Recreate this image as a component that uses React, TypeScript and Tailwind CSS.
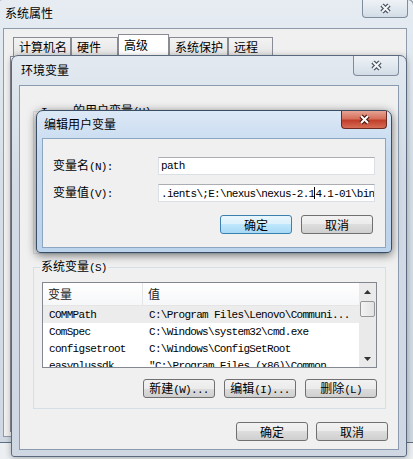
import React from "react";

const mono = "font-['Liberation_Mono',monospace] text-[11px] tracking-[-0.7px]";

function CloseButton({ red, className }: { red?: boolean; className: string }) {
    return (
        <div
            className={`flex items-center justify-center rounded-b-[4px] border border-t-0 ${
                red
                    ? "border-[#6b2a22] bg-[linear-gradient(to_bottom,#e6a394_0%,#d5705c_45%,#c13f2a_55%,#d66c55_100%)]"
                    : "border-[#7f8c9b] bg-[linear-gradient(to_bottom,#eef2f6_0%,#e1e8ef_50%,#d3dce6_100%)]"
            } ${className}`}
        >
            <svg width="13" height="11" viewBox="0 0 13 11">
                <path d="M3 2 L10 9 M10 2 L3 9" stroke={red ? "#4a1a12" : "#46505c"} strokeWidth="4.5" />
                <path d="M3 2 L10 9 M10 2 L3 9" stroke={red ? "#ffffff" : "#f4f6f8"} strokeWidth="2" />
            </svg>
        </div>
    );
}

// chinese label with the latin tail in the old SimSun-like mono
function Label({ zh, lat }: { zh: string; lat?: string }) {
    return (
        <span className="whitespace-nowrap">
            {zh}
            {lat && <span className={mono}>{lat}</span>}
        </span>
    );
}

function Button({ zh, lat, focus, className = "" }: { zh: string; lat?: string; focus?: boolean; className?: string }) {
    return (
        <div
            className={`flex h-[19px] w-[72px] items-center justify-center rounded-[3px] border ${
                focus
                    ? "border-[#3c7fb1] bg-[linear-gradient(to_bottom,#eaf6fd_0%,#d9f0fc_50%,#bee6fd_50%,#a7d9f5_100%)]"
                    : "border-[#707070] bg-[linear-gradient(to_bottom,#f2f2f2_0%,#ebebeb_50%,#dddddd_50%,#cfcfcf_100%)]"
            } ${className}`}
        >
            <Label zh={zh} lat={lat} />
        </div>
    );
}

function TextBox({ value, caretAt }: { value: string; caretAt?: number }) {
    return (
        <div className="flex h-[18px] w-[217px] items-center overflow-hidden whitespace-nowrap border border-[#dbdfe6] border-t-[#abadb3] bg-white pl-[2px]">
            <span className={mono}>
                {caretAt === undefined ? (
                    value
                ) : (
                    <>
                        {value.slice(0, caretAt)}
                        <span className="inline-block h-[12px] w-[1px] translate-y-[2px] bg-black" />
                        {value.slice(caretAt)}
                    </>
                )}
            </span>
        </div>
    );
}

const rows = [
    { name: "COMMPath", value: "C:\\Program Files\\Lenovo\\Communi...", sel: true },
    { name: "ComSpec", value: "C:\\Windows\\system32\\cmd.exe" },
    { name: "configsetroot", value: "C:\\Windows\\ConfigSetRoot" },
    { name: "easyplussdk", value: "\"C:\\Program Files (x86)\\Common" },
];

const tabs = [
    { t: "计算机名", w: "w-[58px]" },
    { t: "硬件", w: "w-[47px]" },
    { t: "高级", w: "w-[51px]", sel: true },
    { t: "系统保护", w: "w-[59px]" },
    { t: "远程", w: "w-[45px]" },
];

export default function App() {
    return (
        <div className="relative h-[459px] w-[413px] overflow-hidden bg-[#eceff2] font-['Noto_Sans_CJK_SC',sans-serif] text-[12px] leading-[14px] text-black">
            {/* 系统属性 window */}
            <div className="absolute left-[-4px] top-[-1px] flex h-[444px] w-[418px] flex-col rounded-t-[6px] border border-[#5f6f82] bg-[linear-gradient(to_bottom,#e6ecf2,#d6dfe8_40%,#d0d9e3)] px-[6px] pb-[5px]">
                <div className="flex h-[28px] items-start justify-between">
                    <span className="pl-[2px] pt-[6px]">系统属性</span>
                    <CloseButton className="mr-[-1px] h-[18px] w-[46px]" />
                </div>
                <div className="flex flex-1 flex-col border border-[#8e9bab] bg-[#f0f0f0]">
                    <div className="flex h-[27px] items-end pl-[9px]">
                        {tabs.map((tab) => (
                            <div
                                key={tab.t}
                                className={`flex items-center border border-b-0 border-[#898c95] pl-[5px] ${tab.w} ${
                                    tab.sel
                                        ? "h-[22px] bg-white pb-[2px]"
                                        : "h-[19px] bg-[linear-gradient(to_bottom,#f3f3f3,#e4e4e4)]"
                                }`}
                            >
                                {tab.t}
                            </div>
                        ))}
                    </div>
                    <div className="ml-[6px] mr-[3px] h-[376px] border border-[#898c95] bg-white" />
                </div>
            </div>

            {/* 环境变量 window */}
            <div className="absolute left-[11px] top-[55px] flex h-[402px] w-[396px] flex-col rounded-t-[7px] rounded-b-[3px] border border-[#5a6a7e] bg-[linear-gradient(to_bottom,#e2e9f0,#d3dce6_30%,#cfd8e2)] px-[7px] pb-[6px] shadow-[0_1px_6px_rgba(0,0,0,0.3)]">
                <div className="flex h-[29px] items-start justify-between">
                    <span className="pl-[2px] pt-[7px]">环境变量</span>
                    <CloseButton className="h-[20px] w-[46px]" />
                </div>
                <div className="flex flex-1 flex-col border border-[#8a9bb0] bg-[#f0f0f0]">
                    <fieldset className="ml-[13px] mr-[12px] mt-[17px] h-[151px] border border-[#d5dfe5]">
                        <legend className="ml-[6px] px-[1px]">
                            <span className={mono}>I</span>
                            <span className="inline-block w-[26px]" />
                            <Label zh="的用户变量" lat="(U)" />
                        </legend>
                    </fieldset>

                    <fieldset className="ml-[13px] mr-[12px] mt-[5px] border border-[#d5dfe5] pb-[10px]">
                        <legend className="ml-[6px] px-[1px]">
                            <Label zh="系统变量" lat="(S)" />
                        </legend>
                        <div className="ml-[8px] mt-[7px] flex h-[86px] w-[335px] overflow-hidden border border-[#828790] bg-white">
                            <div className="flex flex-1 flex-col">
                                <div className="flex h-[23px] shrink-0 border-b border-[#e5e5e5] bg-[linear-gradient(to_bottom,#ffffff,#f6f7f9)]">
                                    <div className="flex w-[100px] items-center border-r border-[#e5e5e5] pl-[5px] text-[#222]">变量</div>
                                    <div className="flex items-center pl-[5px] text-[#222]">值</div>
                                </div>
                                {rows.map((r) => (
                                    <div
                                        key={r.name}
                                        className={`flex h-[17px] shrink-0 items-center whitespace-nowrap ${r.sel ? "bg-[#ececec]" : ""}`}
                                    >
                                        <span className={`w-[100px] pl-[6px] ${mono}`}>{r.name}</span>
                                        <span className={`pl-[6px] ${mono}`}>{r.value}</span>
                                    </div>
                                ))}
                            </div>
                            <div className="flex w-[17px] flex-col bg-[#eaeaea]">
                                <div className="flex h-[17px] items-center justify-center">
                                    <svg width="7" height="4" viewBox="0 0 7 4">
                                        <path d="M0 4 L3.5 0 L7 4 Z" fill="#333" />
                                    </svg>
                                </div>
                                <div className="mx-[1px] mt-[1px] h-[16px] rounded-[2px] border border-[#979797] bg-[linear-gradient(to_right,#f3f3f3,#e2e2e2)]" />
                                <div className="flex-1" />
                                <div className="flex h-[17px] items-center justify-center">
                                    <svg width="7" height="4" viewBox="0 0 7 4">
                                        <path d="M0 0 L7 0 L3.5 4 Z" fill="#333" />
                                    </svg>
                                </div>
                            </div>
                        </div>
                        <div className="mr-[8px] mt-[11px] flex justify-end gap-[9px]">
                            <Button zh="新建" lat="(W)..." />
                            <Button zh="编辑" lat="(I)..." />
                            <Button zh="删除" lat="(L)" />
                        </div>
                    </fieldset>

                    <div className="mr-[10px] mt-[13px] flex justify-end gap-[8px]">
                        <Button zh="确定" />
                        <Button zh="取消" />
                    </div>
                </div>
            </div>

            {/* 编辑用户变量 dialog */}
            <div className="absolute left-[36px] top-[110px] flex h-[143px] w-[356px] flex-col rounded-t-[7px] rounded-b-[4px] border border-[#3b4d64] bg-[linear-gradient(to_bottom,#dbe8f6,#c5d9ef_30%,#bcd3ec)] px-[5px] pb-[4px] shadow-[0_2px_10px_rgba(0,0,0,0.55)]">
                <div className="flex h-[27px] items-start justify-between">
                    <span className="pl-[2px] pt-[6px]">编辑用户变量</span>
                    <CloseButton red className="mr-[-1px] h-[18px] w-[46px]" />
                </div>
                <div className="flex flex-1 flex-col border border-[#8ca5c0] bg-[#f0f0f0] pl-[10px] pr-[10px]">
                    <div className="mt-[18px] flex h-[18px] items-center">
                        <span className="w-[105px]">
                            <Label zh="变量名" lat="(N):" />
                        </span>
                        <TextBox value="path" />
                    </div>
                    <div className="mt-[9px] flex h-[18px] items-center">
                        <span className="w-[105px]">
                            <Label zh="变量值" lat="(V):" />
                        </span>
                        <TextBox value={".ients\\;E:\\nexus\\nexus-2.14.1-01\\bin"} caretAt={26} />
                    </div>
                    <div className="mr-[2px] mt-[13px] flex justify-end gap-[9px]">
                        <Button zh="确定" focus />
                        <Button zh="取消" />
                    </div>
                </div>
            </div>
        </div>
    );
}
